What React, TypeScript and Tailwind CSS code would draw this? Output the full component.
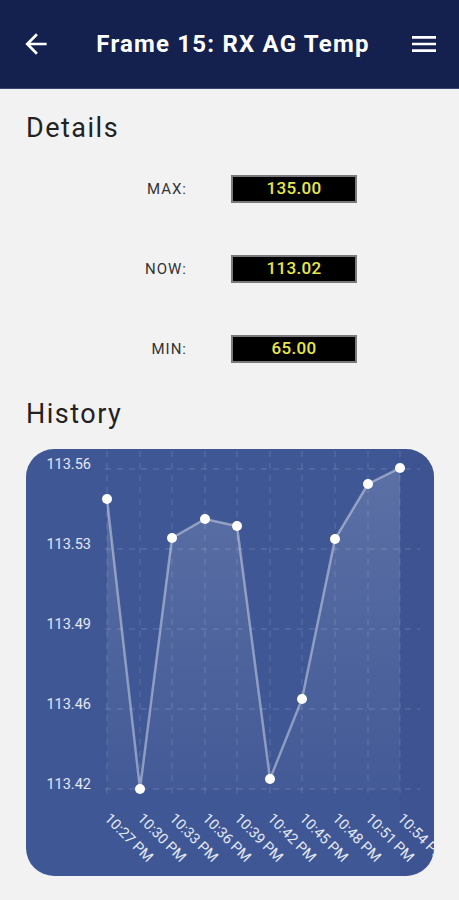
import React from "react";

const pts: [number, number][] = [
  [81, 50],
  [114, 340],
  [146, 89],
  [179, 70],
  [211, 77],
  [244, 330],
  [276, 250],
  [309, 90],
  [342, 35],
  [374, 19],
];
const xLabels = ["10:27 PM", "10:30 PM", "10:33 PM", "10:36 PM", "10:39 PM", "10:42 PM", "10:45 PM", "10:48 PM", "10:51 PM", "10:54 PM"];
const yLabels = ["113.56", "113.53", "113.49", "113.46", "113.42"];

function Chart() {
  const line = pts.map((p, i) => `${i ? "L" : "M"}${p[0]} ${p[1]}`).join(" ");
  const area = `${line} L374 340 L81 340 Z`;
  return (
    <svg width="408" height="427" viewBox="0 0 408 427" className="block">
      <defs>
        <linearGradient id="fillg" x1="0" y1="0" x2="0" y2="1">
          <stop offset="0" stopColor="#ffffff" stopOpacity="0.15" />
          <stop offset="1" stopColor="#ffffff" stopOpacity="0.02" />
        </linearGradient>
      </defs>
      <rect x="374" y="0" width="34" height="427" fill="#3b5090" opacity="0.5" />
      <path d={area} fill="url(#fillg)" />
      {[20, 100, 180, 260, 340].map((y) => (
        <line key={y} x1="79" y1={y} x2="394" y2={y} stroke="#ffffff" strokeOpacity="0.18" strokeWidth="1" strokeDasharray="6 6" />
      ))}
      {pts.map(([x]) => (
        <line key={x} x1={x} y1="2" x2={x} y2="345" stroke="#ffffff" strokeOpacity="0.16" strokeWidth="1" strokeDasharray="6 6" />
      ))}
      <path d={line} fill="none" stroke="#ffffff" strokeOpacity="0.4" strokeWidth="2.5" />
      {pts.map(([x, y]) => (
        <circle key={x} cx={x} cy={y} r="5" fill="#ffffff" />
      ))}
      {yLabels.map((t, i) => (
        <text key={t} x="65" y={15 + i * 80} textAnchor="end" dominantBaseline="central" fill="#e4e8f3" fontSize="14.5" fontFamily="Roboto, sans-serif">
          {t}
        </text>
      ))}
      {xLabels.map((t, i) => (
        <text
          key={t}
          x="0"
          y="0"
          transform={`translate(${pts[i][0] + 4} 363) rotate(45)`}
          fill="#e4e8f3"
          fontSize="14.5"
          fontFamily="Roboto, sans-serif"
          dominantBaseline="hanging"
        >
          {t}
        </text>
      ))}
    </svg>
  );
}

function Row({ label, value }: { label: string; value: string }) {
  return (
    <div className="h-[80px] flex items-center">
      <div className="w-[187px] text-right text-[15px] text-[#333] tracking-[1px]">{label}</div>
      <div className="ml-[44px] w-[126px] h-[28px] bg-black border-2 border-[#7a7a7a] flex items-center justify-center text-[17px] font-medium text-[#e8e84a] tracking-[0.3px]">
        {value}
      </div>
    </div>
  );
}

export default function App() {
  return (
    <div className="w-[459px] h-[900px] bg-[#f2f2f2] overflow-hidden" style={{ fontFamily: "Roboto, 'Noto Sans', sans-serif" }}>
      <div className="h-[89px] bg-[#14214f] flex items-center justify-between pl-[20px] pr-[19px] border-b border-[#3a4670]">
        <svg width="32" height="32" viewBox="0 0 24 24" fill="#ffffff">
          <path d="M20 11H7.83l5.59-5.59L12 4l-8 8 8 8 1.41-1.41L7.83 13H20v-2z" />
        </svg>
        <div className="text-white text-[24px] font-bold tracking-[1.2px] ml-[6px]">Frame 15: RX AG Temp</div>
        <svg width="32" height="32" viewBox="0 0 24 24" fill="#ffffff">
          <path d="M3 18h18v-2H3v2zm0-5h18v-2H3v2zm0-7v2h18V6H3z" />
        </svg>
      </div>
      <div className="px-[26px]">
        <div className="mt-[20px] text-[27px] leading-[38px] text-[#222] tracking-[1.5px]">Details</div>
        <div className="-mx-[26px] mt-[2px]">
          <Row label="MAX:" value="135.00" />
          <Row label="NOW:" value="113.02" />
          <Row label="MIN:" value="65.00" />
        </div>
        <div className="mt-[6px] text-[27px] leading-[38px] text-[#222] tracking-[1.5px]">History</div>
        <div className="mt-[16px] w-[408px] h-[427px] rounded-[28px] overflow-hidden bg-[#3f5795]">
          <Chart />
        </div>
      </div>
    </div>
  );
}
